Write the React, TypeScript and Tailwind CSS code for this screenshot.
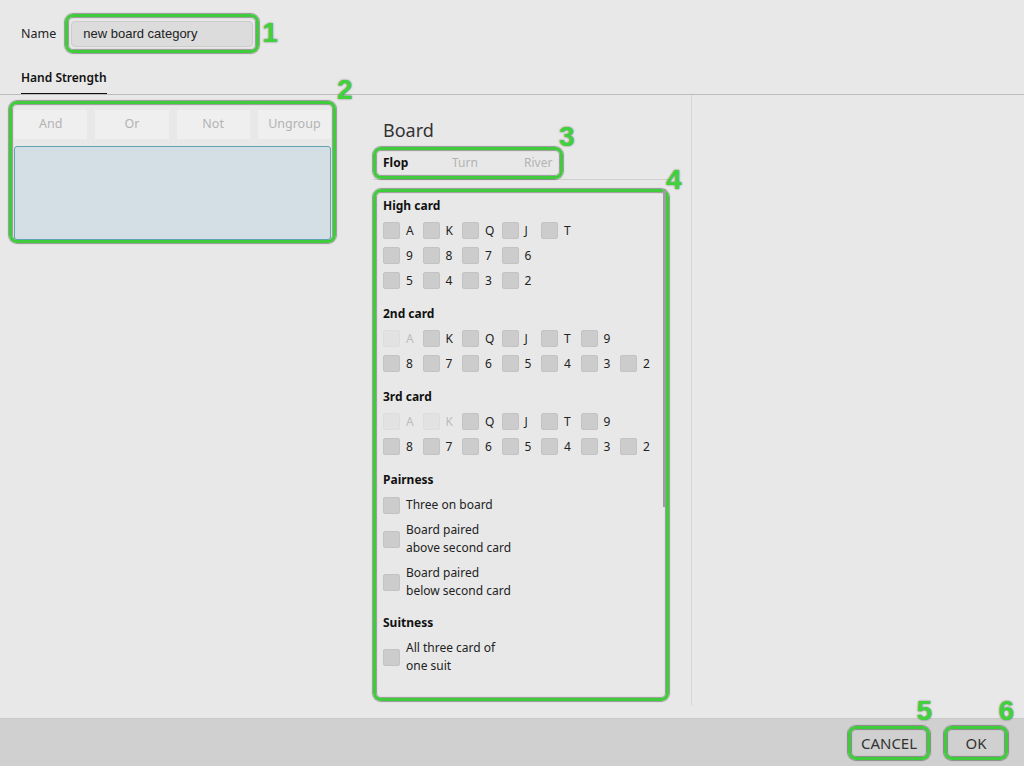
import React from 'react';

const ui = "font-['Noto_Sans',sans-serif]";
const mark =
  'relative rounded-[8px] border-[3px] border-[#3fcc3a] shadow-[0_0_1px_1px_rgba(0,0,0,0.35),inset_0_0_1px_1px_rgba(0,0,0,0.35)]';
const num =
  "absolute font-['Liberation_Sans',sans-serif] font-bold text-[28px] leading-none text-[#3fd23a] [text-shadow:0_0_2px_rgba(0,0,0,0.55)]";

type Cell = { label: string; off?: boolean };

const Box = ({ off }: { off?: boolean }) => (
  <span
    className={
      'block w-[17px] h-[17px] shrink-0 rounded-[2px] border ' +
      (off ? 'bg-[#e2e2e2] border-[#dddddd]' : 'bg-[#cccccc] border-[#c3c3c3]')
    }
  />
);

const CardRow = ({ cells }: { cells: Cell[] }) => (
  <div className="flex h-[25px] items-center">
    {cells.map((c) => (
      <div key={c.label} className="flex w-[39.5px] items-center">
        <Box off={c.off} />
        <span className={'ml-[6px] text-[12px] ' + (c.off ? 'text-[#bcbcbc]' : 'text-[#222]')}>{c.label}</span>
      </div>
    ))}
  </div>
);

const Heading = ({ children }: { children: React.ReactNode }) => (
  <div className="h-[18px] leading-[18px] text-[12px] font-bold text-[#111] mb-[3px]">{children}</div>
);

const Check = ({ lines }: { lines: string[] }) => (
  <div className="flex items-center mb-[7px]">
    <Box />
    <div className="ml-[6px] text-[12px] leading-[18px] text-[#222]">
      {lines.map((l) => (
        <div key={l}>{l}</div>
      ))}
    </div>
  </div>
);

const c = (s: string, off = ''): Cell[] => s.split(' ').map((l) => ({ label: l, off: off.split(' ').includes(l) }));

export default function App() {
  return (
    <div className={`${ui} w-full h-[766px] bg-[#e8e8e8] flex flex-col text-[#222]`}>
      {/* name row */}
      <div className="flex items-center pl-[21px] pt-[14px] h-[52px]">
        <span className="pt-[3px] text-[12.5px] text-[#222]">Name</span>
        <div className={`${mark} ml-[9px] p-[3px] pt-[4px]`}>
          <div className="w-[182px] h-[26px] bg-[#dcdcdc] rounded-[4px] border border-[#cccccc] pl-[11px] flex items-center font-['Liberation_Sans',sans-serif] text-[13px] text-[#222]">
            new board category
          </div>
          <span className={`${num} left-[calc(100%+6px)] top-[2px]`}>1</span>
        </div>
      </div>

      {/* tab bar */}
      <div className="h-[43px] border-b border-[#bdbdbd] pl-[21px] flex items-end">
        <div className="border-b-[1.5px] border-[#111] pb-[7px] text-[12px] font-semibold text-[#111] leading-[16px]">
          Hand Strength
        </div>
      </div>

      {/* body */}
      <div className="flex-1 flex pb-[13px]">
        <div className="w-[353px] pl-[9px] pt-[6px]">
          <div className={`${mark} w-[327px] h-[142px] px-[2px] pt-[6px]`}>
            <div className="grid grid-cols-4 gap-[8px]">
              {['And', 'Or', 'Not', 'Ungroup'].map((b) => (
                <div
                  key={b}
                  className="h-[29px] bg-[#efefef] flex items-center justify-center text-[12.5px] text-[#b3b3b3]"
                >
                  {b}
                </div>
              ))}
            </div>
            <div className="mt-[7px] h-[94px] bg-[#d3dfe4] border border-[#62a3b4] rounded-[3px]" />
            <span className={`${num} left-[325px] top-[-28px]`}>2</span>
          </div>
        </div>

        <div className="w-[339px] border-r border-[#d5d5d5] pl-[20px] pt-[23px]">
          <div className="pl-[10px] text-[18px] leading-[24px] text-[#333]">Board</div>
          <div className="mt-[5px] w-[296px] border-b border-[#cfcfcf]">
            <div className={`${mark} w-[190px] h-[32px] pl-[7px] flex items-center text-[12px]`}>
              <span className="w-[69px] font-bold text-[#111]">Flop</span>
              <span className="w-[72px] text-[#b3b3b3]">Turn</span>
              <span className="text-[#b3b3b3]">River</span>
              <span className={`${num} left-[183px] top-[-27px]`}>3</span>
            </div>
          </div>

          <div className={`${mark} mt-[9px] w-[296px] h-[512px] pl-[7px] pt-[5px]`}>
            <div className="absolute right-[0px] top-[-3px] w-[3px] h-[318px] bg-[#9d9d9d]" />
            <span className={`${num} left-[290px] top-[-26px]`}>4</span>

            <Heading>High card</Heading>
            <CardRow cells={c('A K Q J T')} />
            <CardRow cells={c('9 8 7 6')} />
            <CardRow cells={c('5 4 3 2')} />

            <div className="mt-[12px]">
              <Heading>2nd card</Heading>
              <CardRow cells={c('A K Q J T 9', 'A')} />
              <CardRow cells={c('8 7 6 5 4 3 2')} />
            </div>

            <div className="mt-[12px]">
              <Heading>3rd card</Heading>
              <CardRow cells={c('A K Q J T 9', 'A K')} />
              <CardRow cells={c('8 7 6 5 4 3 2')} />
            </div>

            <div className="mt-[12px]">
              <div className="h-[18px] leading-[18px] text-[12px] font-bold text-[#111] mb-[7px]">Pairness</div>
              <Check lines={['Three on board']} />
              <Check lines={['Board paired', 'above second card']} />
              <Check lines={['Board paired', 'below second card']} />
            </div>

            <div className="mt-[14px]">
              <div className="h-[18px] leading-[18px] text-[12px] font-bold text-[#111] mb-[7px]">Suitness</div>
              <Check lines={['All three card of', 'one suit']} />
            </div>
          </div>
        </div>

        <div className="flex-1" />
      </div>

      {/* footer */}
      <div className="h-[48px] bg-[#d0d0d0] border-t border-[#c9c9c9] flex items-start justify-end pt-[7px] pr-[16px] gap-[14px]">
        <div className={`${mark} w-[82px] h-[34px] flex items-center justify-center text-[15px] text-[#333]`}>
          CANCEL
          <span className={`${num} right-[-5px] top-[-32px]`}>5</span>
        </div>
        <div className={`${mark} w-[64px] h-[34px] flex items-center justify-center text-[15px] text-[#333]`}>
          OK
          <span className={`${num} right-[-9px] top-[-32px]`}>6</span>
        </div>
      </div>
    </div>
  );
}
